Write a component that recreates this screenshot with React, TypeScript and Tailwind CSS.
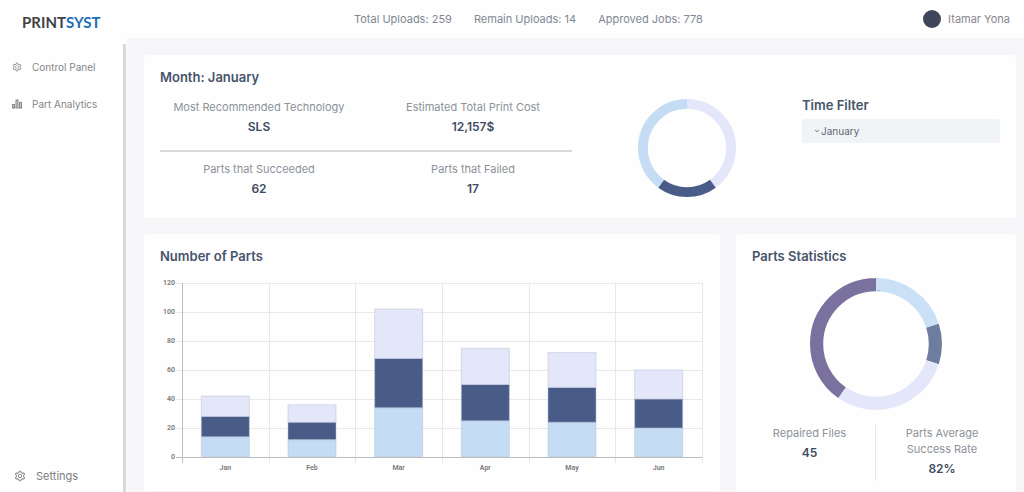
import { AiOutlineSetting } from "react-icons/ai";
import { ChevronDown } from "lucide-react";

type Slice = { value: number; color: string };

const monthSlices: Slice[] = [
  { value: 40, color: "#e4e7f9" },
  { value: 20, color: "#495c87" },
  { value: 40, color: "#c4ddf5" },
];

const partSlices: Slice[] = [
  { value: 20, color: "#cae0f6" },
  { value: 10, color: "#6d7c9f" },
  { value: 29.7, color: "#e4e7f9" },
  { value: 40.3, color: "#7a719f" },
];

const months = [
  { label: "Jan", part: 14 },
  { label: "Feb", part: 12 },
  { label: "Mar", part: 34 },
  { label: "Apr", part: 25 },
  { label: "May", part: 24 },
  { label: "Jun", part: 20 },
];

const stackColors = ["#c4ddf5", "#495c87", "#e4e7f9"];

function Donut({ slices, stroke, title }: { slices: Slice[]; stroke: number; title: string }) {
  const total = slices.reduce((sum, s) => sum + s.value, 0);
  const starts = slices.map((_, i) => slices.slice(0, i).reduce((sum, s) => sum + s.value, 0));
  return (
    <svg viewBox="0 0 100 100" className="block w-full" role="img" aria-label={title}>
      {slices.map((s, i) => (
        <circle
          key={i}
          cx="50"
          cy="50"
          r={50 - stroke / 2}
          fill="none"
          stroke={s.color}
          strokeWidth={stroke}
          pathLength={total}
          strokeDasharray={`${s.value} ${total - s.value}`}
          strokeDashoffset={-starts[i]}
          transform="rotate(-90 50 50)"
        />
      ))}
    </svg>
  );
}

function BarChart() {
  const left = 22;
  const base = 182;
  const top = 8;
  const right = 542;
  const step = (right - left) / months.length;
  const y = (v: number) => base - (v / 120) * (base - top);
  const barWidth = 48;
  return (
    <svg viewBox="0 0 544 200" className="block w-full" role="img" aria-label="Number of parts by month">
      <g shapeRendering="crispEdges" stroke="#e8e8e8">
        {[20, 40, 60, 80, 100, 120].map((v) => (
          <line key={v} x1={left - 6} x2={right} y1={y(v) + 0.5} y2={y(v) + 0.5} />
        ))}
        {months.map((m, i) => (
          <line
            key={m.label}
            x1={left + step * (i + 1) + 0.5}
            x2={left + step * (i + 1) + 0.5}
            y1={top}
            y2={base + 6}
          />
        ))}
      </g>
      {months.map((m, i) =>
        stackColors.map((c, k) => (
          <rect
            key={`${m.label}${c}`}
            x={left + step * (i + 0.5) - barWidth / 2}
            y={y(m.part * (k + 1))}
            width={barWidth}
            height={y(m.part * k) - y(m.part * (k + 1))}
            fill={c}
            stroke="#b8bfd4"
            strokeOpacity="0.5"
          />
        )),
      )}
      <g shapeRendering="crispEdges" stroke="#bdbdbd">
        <line x1={left - 6} x2={right} y1={base + 0.5} y2={base + 0.5} />
        <line x1={left + 0.5} x2={left + 0.5} y1={top} y2={base + 6} />
      </g>
      <g fill="#777777" fontSize="7" fontWeight="600" fontFamily="Roboto, 'Liberation Sans', sans-serif">
        {[0, 20, 40, 60, 80, 100, 120].map((v) => (
          <text key={v} x={left - 7} y={y(v) + 2} textAnchor="end">
            {v}
          </text>
        ))}
        {months.map((m, i) => (
          <text key={m.label} x={left + step * (i + 0.5)} y={base + 13} textAnchor="middle">
            {m.label}
          </text>
        ))}
      </g>
    </svg>
  );
}

function BarsIcon() {
  return (
    <svg viewBox="0 0 20 20" className="size-[10px]" fill="#c9c9cd" stroke="#88888d" strokeWidth="2" aria-hidden="true">
      <rect x="1" y="11" width="4" height="7" />
      <rect x="8" y="2" width="4" height="16" />
      <rect x="15" y="7" width="4" height="11" />
    </svg>
  );
}

function Stat({ label, value }: { label: string; value: string }) {
  return (
    <div className="text-center">
      <p className="text-[11px] leading-4 text-[#8c9299]">{label}</p>
      <p className="mt-1 text-xs leading-4 font-semibold text-[#404b60]">{value}</p>
    </div>
  );
}

const heading = "text-[13px] leading-4 font-semibold text-[#48546a]";
const card = "rounded-sm bg-[#fefefe]";

export default function App() {
  return (
    <div className="flex h-screen overflow-hidden bg-[#f6f6f9] font-['Inter','Open_Sans',sans-serif]">
      <aside className="flex w-[127px] shrink-0 flex-col bg-[#fefefe]">
        <a
          href="#home"
          className="flex h-11 shrink-0 items-center pl-[22px] font-['Lato',sans-serif] text-[15px] font-bold text-[#414246]"
        >
          PRINT<span className="text-[#1d6fb8]">SYST</span>
        </a>
        <div className="mr-px flex flex-1 flex-col border-r-[3px] border-[#d6d9dc] pb-2">
          <nav className="flex flex-1 flex-col gap-[21px] pt-[15px] text-[10px] leading-4 text-[#85868a]">
            <a href="#control" className="flex items-center gap-[10px] pl-3">
              <AiOutlineSetting className="size-[10px]" />
              Control Panel
            </a>
            <a href="#analytics" className="flex items-center gap-[10px] pl-3">
              <BarsIcon />
              Part Analytics
            </a>
          </nav>
          <a href="#settings" className="flex items-center gap-[10px] pl-[14px] text-[11px] leading-4 text-[#7b7c80]">
            <AiOutlineSetting className="size-3" />
            Settings
          </a>
        </div>
      </aside>

      <div className="flex min-w-0 flex-1 flex-col">
        <header className="flex h-[38px] shrink-0 items-center bg-[#fefefe] pr-[14px] pl-[227px] text-[11px] whitespace-nowrap text-[#7f8893]">
          <div className="flex gap-[22px]">
            <span>Total Uploads: 259</span>
            <span>Remain Uploads: 14</span>
            <span>Approved Jobs: 778</span>
          </div>
          <button type="button" className="ml-auto flex items-center gap-[7px] text-[#85868a]">
            <span className="size-[18px] rounded-full bg-[#40465a]" />
            Itamar Yona
          </button>
        </header>

        <main className="grid flex-1 grid-cols-[minmax(0,576fr)_minmax(0,280fr)] content-start gap-4 pt-[17px] pr-2 pl-[17px]">
          <section className={`${card} col-span-2 flex px-4 pt-[14px] pb-[21px]`}>
            <div className="w-1/2 max-w-[412px]">
              <h2 className={heading}>Month: January</h2>
              <div className="mt-[14px] grid grid-cols-2 gap-4 border-b-2 border-[#d9dadc] pb-[15px]">
                <Stat label="Most Recommended Technology" value="SLS" />
                <Stat label="Estimated Total Print Cost" value="12,157$" />
              </div>
              <div className="mt-[9px] grid grid-cols-2 gap-4">
                <Stat label="Parts that Succeeded" value="62" />
                <Stat label="Parts that Failed" value="17" />
              </div>
            </div>
            <div className="flex flex-1 justify-center pt-[30px]">
              <div className="w-[98px]">
                <Donut slices={monthSlices} stroke={10} title="Month summary" />
              </div>
            </div>
            <div className="w-[198px] pt-7">
              <label htmlFor="month" className={`${heading} block`}>
                Time Filter
              </label>
              <div className="mt-[6px] flex h-6 items-center gap-px rounded-xs bg-[#f0f4f7] pl-3 text-[10px] text-[#5f6670]">
                <ChevronDown className="size-[6px]" strokeWidth={4} />
                <select id="month" defaultValue="January" className="flex-1 appearance-none bg-transparent outline-none">
                  <option>January</option>
                  <option>February</option>
                  <option>March</option>
                  <option>April</option>
                  <option>May</option>
                  <option>June</option>
                </select>
              </div>
            </div>
          </section>

          <section className={`${card} self-start px-4 pt-[14px] pb-4`}>
            <h2 className={heading}>Number of Parts</h2>
            <div className="mt-[11px]">
              <BarChart />
            </div>
          </section>

          <section className={`${card} px-4 pt-[14px] pb-4`}>
            <h2 className={heading}>Parts Statistics</h2>
            <div className="mx-auto mt-[14px] w-[132px]">
              <Donut slices={partSlices} stroke={10} title="Parts statistics" />
            </div>
            <div className="mt-[15px] grid grid-cols-2 divide-x divide-[#e6e7ea]">
              <div className="pr-2">
                <Stat label="Repaired Files" value="45" />
              </div>
              <div className="pr-4 pb-1 pl-6">
                <Stat label="Parts Average Success Rate" value="82%" />
              </div>
            </div>
          </section>
        </main>
      </div>
    </div>
  );
}
